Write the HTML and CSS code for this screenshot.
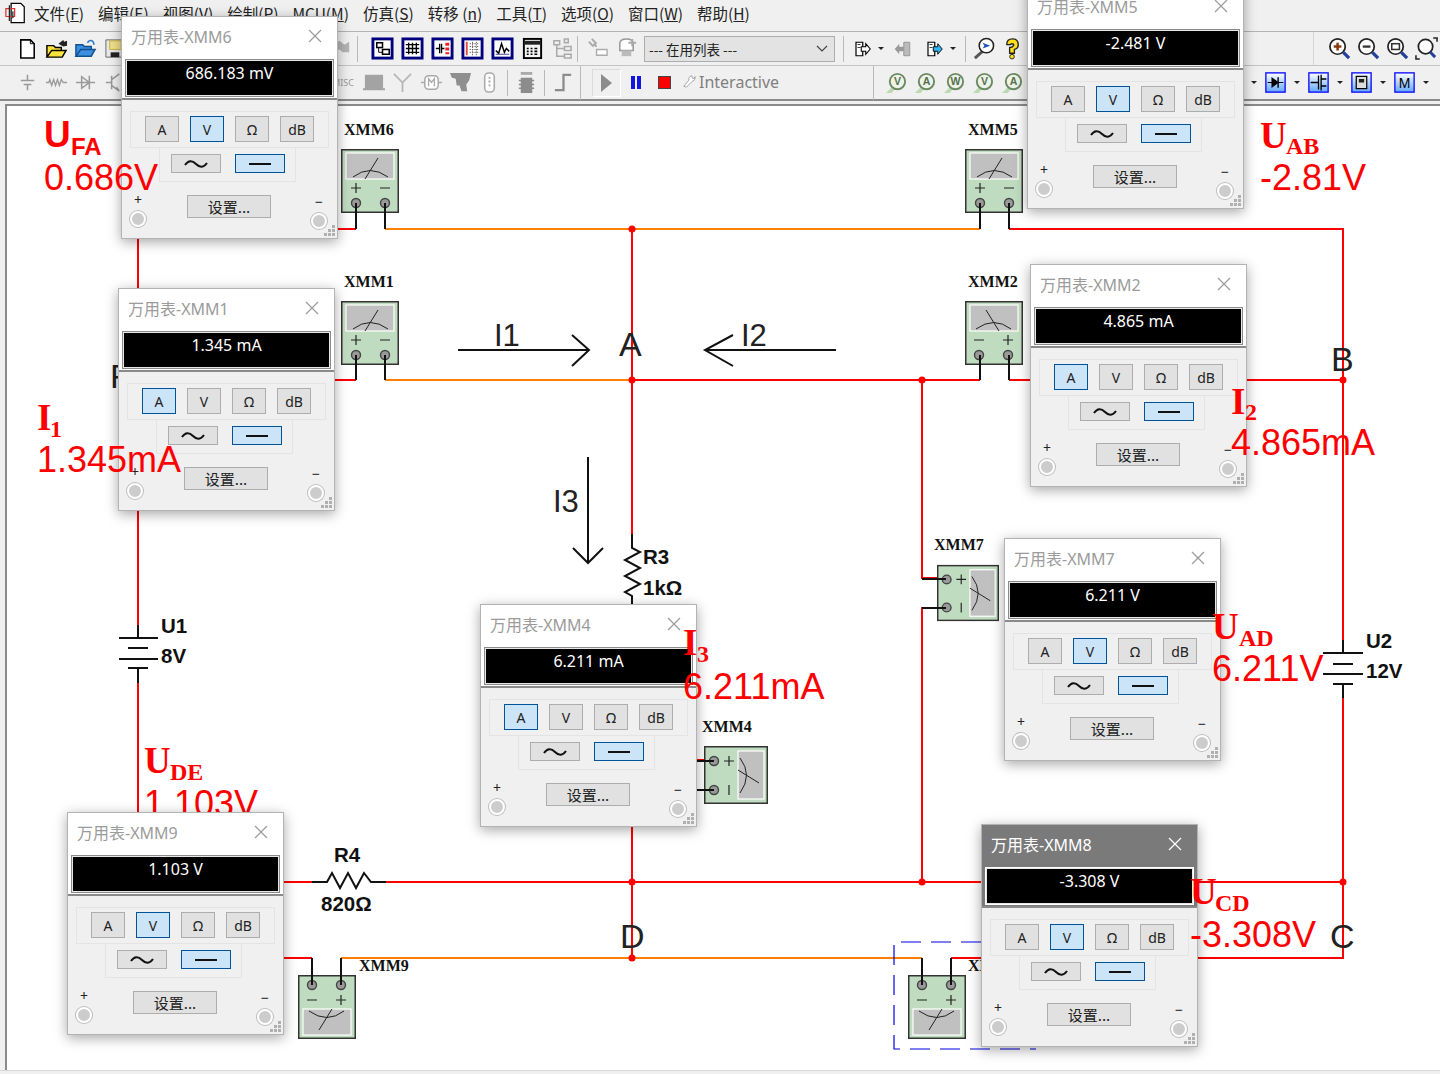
FILE: index.html
```html
<!DOCTYPE html>
<html lang="zh-CN">
<head>
  <meta charset="UTF-8" />
  <title>Multisim - 万用表</title>
  <link rel="stylesheet" href="styles.css">
</head>
<body>

  <!-- icon sprite -->
  <svg class="sprite" aria-hidden="true">
    <symbol id="i-app" viewBox="0 0 24 24"><path d="M7 1h11l4 4v18H7z" fill="#fff" stroke="#000" stroke-width="1.4"/><path d="M1 7h10v9H1z" fill="none" stroke="#d33" stroke-width="1.4"/><path d="M5 3v18M9 10v8" stroke="#222" stroke-width="1.4"/></symbol>
    <symbol id="i-new" viewBox="0 0 24 24"><path d="M5 3h10l4 4v15H5z" fill="#fff" stroke="#000" stroke-width="1.6"/><path d="M15 3v4h4" fill="none" stroke="#000"/></symbol>
    <symbol id="i-open" viewBox="0 0 24 24"><path d="M2 21V9h7l2 2h6v3H7l-5 7h16l4-7H7" fill="#ffe23c" stroke="#000" stroke-width="1.5"/><path d="M14 7l5-4 1 2 3-1v5l-4 1z" fill="#222"/></symbol>
    <symbol id="i-folder" viewBox="0 0 24 24"><path d="M2 20V8h7l2 2h7v3H7l-5 7h16l4-7H7" fill="#3b8ee0" stroke="#10508f" stroke-width="1.5"/><path d="M14 6q3-4 6-1l1 3" fill="none" stroke="#2a78c8" stroke-width="1.6"/></symbol>
    <symbol id="i-save" viewBox="0 0 24 24"><path d="M3 3h18v18H3z" fill="#e8e8e8" stroke="#666"/><path d="M7 4h12v9H7z" fill="#efe08a" stroke="#c9b23c"/><path d="M8 16h9v5H8z" fill="#222"/></symbol>
    <symbol id="i-gear" viewBox="0 0 24 24"><path d="M3 8l6-4 5 4 5-3v11h-7l-3-3-6 1z" fill="#b4b4b4"/></symbol>
    <symbol id="t-boxes" viewBox="0 0 24 24"><rect x="2" y="2" width="20" height="20" fill="#fff" stroke="#00007f" stroke-width="3"/><rect x="6" y="6" width="6" height="5" fill="#fff" stroke="#000" stroke-width="1.6"/><rect x="12" y="13" width="7" height="5" fill="#fff" stroke="#000" stroke-width="1.6"/><path d="M8 11v5h4" fill="none" stroke="#000"/></symbol>
    <symbol id="t-grid" viewBox="0 0 24 24"><rect x="2" y="2" width="20" height="20" fill="#fff" stroke="#00007f" stroke-width="3"/><path d="M5 8h14M5 12h14M5 16h14M8 6v12M12 6v12M16 6v12" stroke="#000" stroke-width="1.4"/></symbol>
    <symbol id="t-cap" viewBox="0 0 24 24"><rect x="2" y="2" width="20" height="20" fill="#fff" stroke="#00007f" stroke-width="3"/><path d="M5 12h4M11 12h3M9 7v10M11 7v10" stroke="#000" stroke-width="1.4"/><path d="M15 6h4v3h-4zM15 11h4v3h-4zM15 16h4v2h-4z" fill="#e22"/></symbol>
    <symbol id="t-sheet" viewBox="0 0 24 24"><rect x="2" y="2" width="20" height="20" fill="#fff" stroke="#00007f" stroke-width="3"/><path d="M5 5h2v14H5z" fill="#e44"/><path d="M9 7h10M9 10h10M9 13h10M9 16h10M12 5v14M16 5v14" stroke="#666" stroke-dasharray="1.5 1"/></symbol>
    <symbol id="t-wave" viewBox="0 0 24 24"><rect x="2" y="2" width="20" height="20" fill="#fff" stroke="#00007f" stroke-width="3"/><path d="M5 14l3 3 3-10 3 9 2-4 3 3" fill="none" stroke="#000" stroke-width="1.5"/><path d="M5 18h14" stroke="#448" stroke-width="1"/></symbol>
    <symbol id="t-chip" viewBox="0 0 24 24"><rect x="3" y="2" width="18" height="20" fill="#f4f4f4" stroke="#000" stroke-width="2"/><path d="M4 4h16v4H4z" fill="#222"/><path d="M6 12h2M10 12h2M14 12h3M6 15h2M10 15h2M14 15h3M6 18h2M10 18h2M14 18h3" stroke="#000" stroke-width="1.6"/></symbol>
    <symbol id="t-tree" viewBox="0 0 24 24"><path d="M3 4h6v4H3zM14 2h4v4h-4zM14 10h7v4h-7zM14 18h7v4h-7z" fill="none" stroke="#aaa" stroke-width="1.6"/><path d="M6 8v12h8M6 12h8" fill="none" stroke="#aaa" stroke-width="1.6"/></symbol>
    <symbol id="g-pin" viewBox="0 0 24 24"><path d="M3 5l5 5M6 2l5 5M8 7l3 3" stroke="#aaa" stroke-width="2"/><path d="M11 13h11v6H11z" fill="#fff" stroke="#aaa" stroke-width="1.4"/></symbol>
    <symbol id="g-plug" viewBox="0 0 24 24"><path d="M5 7q0-5 7-5t7 5v7H5z" fill="#fff" stroke="#999" stroke-width="1.6"/><path d="M7 14h10v6H7z" fill="#bbb"/><path d="M18 2v8M22 6h-8" stroke="#aaa" stroke-width="2"/></symbol>
    <symbol id="a-page" viewBox="0 0 24 24"><path d="M4 3h9v18H4z" fill="#fff" stroke="#000" stroke-width="1.6"/><path d="M6 6h4M6 10h4" stroke="#000"/><path d="M11 9h6V5l6 7-6 7v-4h-6z" fill="#fff" stroke="#000" stroke-width="1.4"/></symbol>
    <symbol id="a-page-grey" viewBox="0 0 24 24"><path d="M13 3h8v18h-8z" fill="#bbb" stroke="#888"/><path d="M13 9H7V5l-6 7 6 7v-4h6z" fill="#999"/></symbol>
    <symbol id="a-page-blue" viewBox="0 0 24 24"><path d="M4 3h9v18H4z" fill="#fff" stroke="#000" stroke-width="1.6"/><path d="M6 6h4M6 10h4" stroke="#000"/><path d="M11 9h6V5l6 7-6 7v-4h-6z" fill="#2fb6f0" stroke="#000" stroke-width="1.2"/></symbol>
    <symbol id="i-find" viewBox="0 0 24 24"><path d="M11 15l-8 7" stroke="#555" stroke-width="3"/><circle cx="15" cy="9" r="7.5" fill="#fff" stroke="#222" stroke-width="1.6"/><path d="M11 6l8 3-8 3 2-3z" fill="#1c4fc0"/></symbol>
    <symbol id="i-help" viewBox="0 0 24 24"><path d="M6 8q0-6 6-6t6 6q0 4-4 5v4h-5v-6q3 0 4-2t-2-2q-1 0-1 1z" fill="#ffe11a" stroke="#222" stroke-width="1.4"/><circle cx="11.5" cy="20.5" r="2.4" fill="#ffe11a" stroke="#222"/></symbol>
    <symbol id="z-plus" viewBox="0 0 24 24"><circle cx="10" cy="10" r="8" fill="#fff" stroke="#222" stroke-width="1.8"/><path d="M6 10h8M10 6v8" stroke="#8a3a12" stroke-width="2.6"/><path d="M16 16l6 6" stroke="#23409c" stroke-width="3.4"/></symbol>
    <symbol id="z-minus" viewBox="0 0 24 24"><circle cx="10" cy="10" r="8" fill="#fff" stroke="#222" stroke-width="1.8"/><path d="M6 10h8" stroke="#333" stroke-width="2.4"/><path d="M16 16l6 6" stroke="#23409c" stroke-width="3.4"/></symbol>
    <symbol id="z-box" viewBox="0 0 24 24"><circle cx="10" cy="10" r="8" fill="#fff" stroke="#222" stroke-width="1.8"/><rect x="6" y="7" width="8" height="6" fill="none" stroke="#333" stroke-width="1.6"/><path d="M16 16l6 6" stroke="#23409c" stroke-width="3.4"/></symbol>
    <symbol id="z-fit" viewBox="0 0 24 24"><circle cx="11" cy="10" r="7.5" fill="#fff" stroke="#222" stroke-width="1.8"/><path d="M1 19v4h4M23 5V1h-4" fill="none" stroke="#222" stroke-width="1.6"/><path d="M16 16l5 5" stroke="#23409c" stroke-width="3"/></symbol>
    <symbol id="c-batt" viewBox="0 0 24 24"><path d="M12 4v6M12 14v6M5 10h14M8 14h8" stroke="#9a9a9a" stroke-width="1.6"/></symbol>
    <symbol id="c-res" viewBox="0 0 24 24"><path d="M1 12h3l1-3 2 6 2-6 2 6 2-6 2 6 2-6 2 3h4" fill="none" stroke="#9a9a9a" stroke-width="1.4"/></symbol>
    <symbol id="c-diode" viewBox="0 0 24 24"><path d="M2 12h20M8 6v12l8-6zM16 5v14" fill="none" stroke="#9a9a9a" stroke-width="1.6"/></symbol>
    <symbol id="c-npn" viewBox="0 0 24 24"><path d="M9 5v14M3 12h6M9 9l8-6M9 15l8 6M14 17l3 4" fill="none" stroke="#9a9a9a" stroke-width="1.6"/></symbol>
    <symbol id="c-monitor" viewBox="0 0 24 24"><path d="M3 4h19v14H3zM1 18h23v2H1z" fill="#a3a3a3"/></symbol>
    <symbol id="c-ant" viewBox="0 0 24 24"><path d="M12 12v10M3 3l9 9 9-9" fill="none" stroke="#b5b5b5" stroke-width="1.8"/></symbol>
    <symbol id="c-mech" viewBox="0 0 24 24"><rect x="5" y="5" width="14" height="14" rx="4" fill="#fff" stroke="#aaa" stroke-width="1.6"/><path d="M1 12h4M19 12h4M9 16V8l3 4 3-4v8" fill="none" stroke="#aaa" stroke-width="1.4"/></symbol>
    <symbol id="c-rf" viewBox="0 0 24 24"><path d="M1 2h22l-2 8-3 4 1 7h-6l-2-6H8l-1-7-4-1z" fill="#8f8f8f"/></symbol>
    <symbol id="c-conn" viewBox="0 0 24 24"><rect x="7" y="2" width="10" height="20" rx="4" fill="#fff" stroke="#aaa" stroke-width="1.6"/><path d="M12 6v12" stroke="#aaa" stroke-width="2" stroke-dasharray="2 2"/></symbol>
    <symbol id="c-mcu" viewBox="0 0 24 24"><path d="M6 7h12v16H6z" fill="#8c8c8c"/><path d="M4 10h16M4 14h16M4 18h16" stroke="#8c8c8c" stroke-width="1.6"/><path d="M6 1h12v3H6z" fill="#aaa"/></symbol>
    <symbol id="c-step" viewBox="0 0 24 24"><path d="M3 20h9V4h8" fill="none" stroke="#8c8c8c" stroke-width="2.4"/></symbol>
    <symbol id="s-diode" viewBox="0 0 24 24"><rect x="1" y="1" width="22" height="22" fill="url(#tile)" stroke="#1414ff" stroke-width="1.6"/><path d="M3 12h18M8 7v10l7-5z" fill="#000" stroke="#000" stroke-width="1.2"/><path d="M15 6v12" stroke="#000" stroke-width="1.6"/></symbol>
    <symbol id="s-fet" viewBox="0 0 24 24"><rect x="1" y="1" width="22" height="22" fill="url(#tile)" stroke="#1414ff" stroke-width="1.6"/><path d="M3 12h9M12 4v16M15 3v18M15 8h6M15 16h6" fill="none" stroke="#000" stroke-width="1.5"/></symbol>
    <symbol id="s-chip" viewBox="0 0 24 24"><rect x="1" y="1" width="22" height="22" fill="url(#tile)" stroke="#1414ff" stroke-width="1.6"/><rect x="6" y="5" width="12" height="14" fill="#ddd" stroke="#000" stroke-width="1.4"/><rect x="9" y="8" width="6" height="4" fill="#222"/></symbol>
    <symbol id="s-blank" viewBox="0 0 24 24"><rect x="1" y="1" width="22" height="22" fill="url(#tile)" stroke="#1414ff" stroke-width="1.6"/></symbol>
    <symbol id="v-base" viewBox="0 0 24 24"><path d="M1 23l7-7 3 2-4 5z" fill="#bcd9b4"/><circle cx="13" cy="11" r="8" fill="#eef3ea" stroke="#6c8a62" stroke-width="2"/></symbol>
    <linearGradient id="tile" x1="0" y1="0" x2="0" y2="1"><stop offset="0" stop-color="#fff"/><stop offset="1" stop-color="#63a8ff"/></linearGradient>

    <!-- schematic multimeter, terminals along the bottom -->
    <symbol id="meter" viewBox="0 0 58 64" overflow="visible">
      <rect x="0.75" y="0.75" width="56.5" height="62.5" fill="#c0dcc0" stroke="#333" stroke-width="1.5"/>
      <rect x="5" y="4" width="48" height="26" fill="#c0c0c0" stroke="#fff" stroke-width="1.2"/>
      <path d="M12 28q17-13 35 0" fill="none" stroke="#222" stroke-width="1"/>
      <path d="M24 30l13-21" stroke="#222" stroke-width="1"/>
      <path d="M10 39h10M15 34v10M39 39h10" stroke="#222" stroke-width="1.2"/>
      <circle cx="15" cy="54" r="4.5" fill="#999" stroke="#444" stroke-width="1.4"/>
      <circle cx="44" cy="54" r="4.5" fill="#999" stroke="#444" stroke-width="1.4"/>
    </symbol>
    <symbol id="grip" viewBox="0 0 12 12"><path d="M8 0h3v3H8zM4 4h3v3H4zM8 4h3v3H8zM0 8h3v3H0zM4 8h3v3H4zM8 8h3v3H8z" fill="#b0b0b0"/></symbol>
    <symbol id="close" viewBox="0 0 14 14"><path d="M1 1l12 12M13 1L1 13" fill="none" stroke="currentColor" stroke-width="1.2"/></symbol>
  </svg>

  <div class="app">
    <nav class="menubar">
      <svg class="app-icon"><use href="#i-app"/></svg>
      <span class="menu-item">文件(<u>F</u>)</span>
      <span class="menu-item">编辑(<u>E</u>)</span>
      <span class="menu-item">视图(<u>V</u>)</span>
      <span class="menu-item">绘制(<u>P</u>)</span>
      <span class="menu-item">MCU(<u>M</u>)</span>
      <span class="menu-item">仿真(<u>S</u>)</span>
      <span class="menu-item">转移 (<u>n</u>)</span>
      <span class="menu-item">工具(<u>T</u>)</span>
      <span class="menu-item">选项(<u>O</u>)</span>
      <span class="menu-item">窗口(<u>W</u>)</span>
      <span class="menu-item">帮助(<u>H</u>)</span>
    </nav>

    <div class="toolbar row-main">
      <span class="ic"><svg><use href="#i-new"/></svg></span>
      <span class="ic"><svg><use href="#i-open"/></svg></span>
      <span class="ic"><svg><use href="#i-folder"/></svg></span>
      <span class="ic"><svg><use href="#i-save"/></svg></span>
      <span class="hidden-gap"></span>
      <span class="ic"><svg><use href="#i-gear"/></svg></span>
      <span class="sep sep-a"></span>
      <span class="ic wide"><svg><use href="#t-boxes"/></svg></span>
      <span class="ic wide"><svg><use href="#t-grid"/></svg></span>
      <span class="ic wide"><svg><use href="#t-cap"/></svg></span>
      <span class="ic wide"><svg><use href="#t-sheet"/></svg></span>
      <span class="ic wide"><svg><use href="#t-wave"/></svg></span>
      <span class="ic wide"><svg><use href="#t-chip"/></svg></span>
      <span class="ic wide"><svg><use href="#t-tree"/></svg></span>
      <span class="sep"></span>
      <span class="ic pin"><svg><use href="#g-pin"/></svg></span>
      <span class="ic"><svg><use href="#g-plug"/></svg></span>
      <div class="combo">
        <span>--- 在用列表 ---</span>
        <svg class="chevron" viewBox="0 0 12 8"><path d="M1 1l5 5 5-5" fill="none" stroke="#444" stroke-width="1.2"/></svg>
      </div>
      <span class="sep sep-b"></span>
      <span class="ic small"><svg><use href="#a-page"/></svg></span>
      <span class="drop"></span>
      <span class="ic small pad"><svg><use href="#a-page-grey"/></svg></span>
      <span class="ic small spaced"><svg><use href="#a-page-blue"/></svg></span>
      <span class="drop"></span>
      <span class="sep sep-c"></span>
      <span class="ic"><svg><use href="#i-find"/></svg></span>
      <span class="ic"><svg><use href="#i-help"/></svg></span>
      <div class="right-tools">
        <span class="ic"><svg><use href="#z-plus"/></svg></span>
        <span class="ic"><svg><use href="#z-minus"/></svg></span>
        <span class="ic"><svg><use href="#z-box"/></svg></span>
        <span class="ic"><svg><use href="#z-fit"/></svg></span>
      </div>
    </div>

    <div class="toolbar row-parts">
      <span class="ic"><svg><use href="#c-batt"/></svg></span>
      <span class="ic"><svg><use href="#c-res"/></svg></span>
      <span class="ic"><svg><use href="#c-diode"/></svg></span>
      <span class="ic"><svg><use href="#c-npn"/></svg></span>
      <span class="hidden-gap parts-gap"></span>
      <span class="misc">MISC</span>
      <span class="ic"><svg><use href="#c-monitor"/></svg></span>
      <span class="ic"><svg><use href="#c-ant"/></svg></span>
      <span class="ic"><svg><use href="#c-mech"/></svg></span>
      <span class="ic"><svg><use href="#c-rf"/></svg></span>
      <span class="ic"><svg><use href="#c-conn"/></svg></span>
      <span class="sep sep-d"></span>
      <span class="ic"><svg><use href="#c-mcu"/></svg></span>
      <span class="sep sep-e"></span>
      <span class="ic"><svg><use href="#c-step"/></svg></span>
      <span class="sep sep-f"></span>
      <span class="play-box"><span class="play"></span></span>
      <span class="pause"></span>
      <span class="stop"></span>
      <svg class="wrench" viewBox="0 0 16 16"><path d="M2 14l6-7q-1-4 3-5l1 3 2 0 1-2q1 4-4 6l-6 6z" fill="#fff" stroke="#999"/></svg>
      <span class="interactive">Interactive</span>
      <span class="sep sep-g"></span>
      <span class="ic"><svg viewBox="0 0 24 24"><use href="#v-base" width="24" height="24"/><text x="13" y="15" class="meter-text">V</text></svg></span>
      <span class="ic"><svg viewBox="0 0 24 24"><use href="#v-base" width="24" height="24"/><text x="13" y="15" class="meter-text">A</text></svg></span>
      <span class="ic"><svg viewBox="0 0 24 24"><use href="#v-base" width="24" height="24"/><text x="13" y="15" class="meter-text">W</text></svg></span>
      <span class="ic"><svg viewBox="0 0 24 24"><use href="#v-base" width="24" height="24"/><text x="13" y="15" class="meter-text">V</text></svg></span>
      <span class="ic"><svg viewBox="0 0 24 24"><use href="#v-base" width="24" height="24"/><text x="13" y="15" class="meter-text">A</text></svg></span>
      <div class="right-tools tiles">
        <span class="drop"></span>
        <span class="ic"><svg><use href="#s-diode"/></svg></span><span class="drop"></span>
        <span class="ic"><svg><use href="#s-fet"/></svg></span><span class="drop"></span>
        <span class="ic"><svg><use href="#s-chip"/></svg></span><span class="drop"></span>
        <span class="ic"><svg viewBox="0 0 24 24"><use href="#s-blank" width="24" height="24"/><text x="12" y="18" class="tile-text">M</text></svg></span><span class="drop"></span>
      </div>
    </div>

    <div class="sheet"></div>
    <div class="statusbar"></div>
  </div>

  <!-- free canvas: the circuit, the instrument windows on it, then the hand-written notes -->
  <div class="stage">
    <svg class="circuit" viewBox="0 0 1440 1074">
      <g class="wire red">
        <path d="M138 229V625M138 683V958"/>
        <path d="M138 229H356M1009 229H1343V640M1343 698V958H951"/>
        <path d="M138 380H356M632 380H980M1009 380H1343"/>
        <path d="M632 229V534M632 604V958"/>
        <path d="M922 380V578H946M922 882V608H946"/>
        <path d="M138 882H312M386 882H1343"/>
        <path d="M138 958H312"/>
        <path d="M690 760H714M690 790H714"/>
      </g>
      <g class="wire orange">
        <path d="M385 229H980M385 380H632M341 958H922"/>
      </g>
      <g class="nodes">
        <circle cx="632" cy="229" r="3.5"/><circle cx="632" cy="380" r="3.5"/>
        <circle cx="922" cy="380" r="3.5"/><circle cx="1343" cy="380" r="3.5"/>
        <circle cx="632" cy="882" r="3.5"/><circle cx="922" cy="882" r="3.5"/>
        <circle cx="1343" cy="882" r="3.5"/><circle cx="632" cy="958" r="3.5"/>
      </g>

      <!-- parts -->
      <use href="#meter" x="341" y="149" width="58" height="64"/>
      <use href="#meter" x="965" y="149" width="58" height="64"/>
      <use href="#meter" x="341" y="301" width="58" height="64"/>
      <use href="#meter" transform="translate(1023 301) scale(-1 1)" width="58" height="64"/>
      <use href="#meter" transform="translate(999 564) rotate(90)" width="58" height="62"/>
      <use href="#meter" transform="translate(768 746) rotate(90)" width="58" height="64"/>
      <use href="#meter" transform="translate(356 1039) rotate(180)" width="58" height="64"/>
      <use href="#meter" transform="translate(966 1039) rotate(180)" width="58" height="64"/>
      <g class="wire black">
        <path d="M138 625V638M119 638H158M128 648H148M119 659H158M128 668H148M138 668V683"/>
        <path d="M1343 640V653M1323 653H1363M1333 664H1353M1323 674H1363M1333 684H1353M1343 684V698"/>
        <path d="M632 534V548L640 552 625 560 640 568 625 576 640 584 625 592 632 596V604"/>
        <path d="M312 882H327L332 873 340 888 348 873 356 888 364 873 371 882H386"/>
        <path d="M356 203V229M385 203V229M980 203V229M1009 203V229"/>
        <path d="M356 355V380M385 355V380M980 355V380M1009 355V380"/>
        <path d="M312 958V985M341 958V985M922 958V985M951 958V985"/>
        <path d="M922 579H946M922 608H946M696 761H714M696 790H714"/>
      </g>

      <path class="select-box" d="M981 942H894V1049H1036"/>

      <g class="refdes">
        <text x="344" y="135">XMM6</text>
        <text x="968" y="135">XMM5</text>
        <text x="344" y="287">XMM1</text>
        <text x="968" y="287">XMM2</text>
        <text x="934" y="550">XMM7</text>
        <text x="702" y="732">XMM4</text>
        <text x="359" y="971">XMM9</text>
        <text x="968" y="971">XMM8</text>
      </g>
      <g class="part-label">
        <text x="161" y="633">U1</text>
        <text x="161" y="663">8V</text>
        <text x="1366" y="648">U2</text>
        <text x="1366" y="678">12V</text>
        <text x="643" y="564">R3</text>
        <text x="643" y="595">1kΩ</text>
        <text x="334" y="862">R4</text>
        <text x="321" y="911">820Ω</text>
      </g>

      <g class="note-current">
        <text x="494" y="346">I1</text>
        <text x="741" y="346">I2</text>
        <text x="553" y="512">I3</text>
      </g>
      <g class="note-black">
        <text x="619" y="356">A</text>
        <text x="1331" y="371">B</text>
        <text x="620" y="948">D</text>
        <text x="1330" y="948">C</text>
        <text x="110" y="388">F</text>
      </g>
      <g class="arrow">
        <path d="M458 350H589M572 335L589 350 572 366"/>
        <path d="M836 350H705M733 335L705 350 733 366"/>
        <path d="M588 457V563M573 548L588 563 603 548"/>
      </g>

      <!-- this note sits under the XMM9 window -->
      <text class="note-val" x="144" y="816">1.103V</text>
      <text class="note-serif" x="144" y="773">U</text>
      <text class="note-serif-sub" x="170" y="780">DE</text>
    </svg>

    <section class="win xmm6">
      <header class="win-title"><span>万用表-XMM6</span><svg><use href="#close"/></svg></header>
      <div class="display">686.183 mV</div>
      <div class="panel">
        <div class="group modes"><button>A</button><button class="on">V</button><button>Ω</button><button>dB</button></div>
        <div class="group signal"><button class="sig"><svg viewBox="0 0 24 8"><path d="M1 5q5-7 11-1t11-1"/></svg></button><button class="sig on"><svg viewBox="0 0 24 8"><path d="M1 4h22"/></svg></button></div>
        <div class="bottom">
          <div class="term">+<i></i></div>
          <button class="setup">设置...</button>
          <div class="term minus">−<i></i></div>
        </div>
      </div>
      <svg class="win-grip"><use href="#grip"/></svg>
    </section>

    <section class="win xmm5">
      <header class="win-title"><span>万用表-XMM5</span><svg><use href="#close"/></svg></header>
      <div class="display">-2.481 V</div>
      <div class="panel">
        <div class="group modes"><button>A</button><button class="on">V</button><button>Ω</button><button>dB</button></div>
        <div class="group signal"><button class="sig"><svg viewBox="0 0 24 8"><path d="M1 5q5-7 11-1t11-1"/></svg></button><button class="sig on"><svg viewBox="0 0 24 8"><path d="M1 4h22"/></svg></button></div>
        <div class="bottom">
          <div class="term">+<i></i></div>
          <button class="setup">设置...</button>
          <div class="term minus">−<i></i></div>
        </div>
      </div>
      <svg class="win-grip"><use href="#grip"/></svg>
    </section>

    <section class="win xmm1">
      <header class="win-title"><span>万用表-XMM1</span><svg><use href="#close"/></svg></header>
      <div class="display">1.345 mA</div>
      <div class="panel">
        <div class="group modes"><button class="on">A</button><button>V</button><button>Ω</button><button>dB</button></div>
        <div class="group signal"><button class="sig"><svg viewBox="0 0 24 8"><path d="M1 5q5-7 11-1t11-1"/></svg></button><button class="sig on"><svg viewBox="0 0 24 8"><path d="M1 4h22"/></svg></button></div>
        <div class="bottom">
          <div class="term">+<i></i></div>
          <button class="setup">设置...</button>
          <div class="term minus">−<i></i></div>
        </div>
      </div>
      <svg class="win-grip"><use href="#grip"/></svg>
    </section>

    <section class="win xmm2">
      <header class="win-title"><span>万用表-XMM2</span><svg><use href="#close"/></svg></header>
      <div class="display">4.865 mA</div>
      <div class="panel">
        <div class="group modes"><button class="on">A</button><button>V</button><button>Ω</button><button>dB</button></div>
        <div class="group signal"><button class="sig"><svg viewBox="0 0 24 8"><path d="M1 5q5-7 11-1t11-1"/></svg></button><button class="sig on"><svg viewBox="0 0 24 8"><path d="M1 4h22"/></svg></button></div>
        <div class="bottom">
          <div class="term">+<i></i></div>
          <button class="setup">设置...</button>
          <div class="term minus">−<i></i></div>
        </div>
      </div>
      <svg class="win-grip"><use href="#grip"/></svg>
    </section>

    <section class="win xmm7">
      <header class="win-title"><span>万用表-XMM7</span><svg><use href="#close"/></svg></header>
      <div class="display">6.211 V</div>
      <div class="panel">
        <div class="group modes"><button>A</button><button class="on">V</button><button>Ω</button><button>dB</button></div>
        <div class="group signal"><button class="sig"><svg viewBox="0 0 24 8"><path d="M1 5q5-7 11-1t11-1"/></svg></button><button class="sig on"><svg viewBox="0 0 24 8"><path d="M1 4h22"/></svg></button></div>
        <div class="bottom">
          <div class="term">+<i></i></div>
          <button class="setup">设置...</button>
          <div class="term minus">−<i></i></div>
        </div>
      </div>
      <svg class="win-grip"><use href="#grip"/></svg>
    </section>

    <section class="win xmm4">
      <header class="win-title"><span>万用表-XMM4</span><svg><use href="#close"/></svg></header>
      <div class="display">6.211 mA</div>
      <div class="panel">
        <div class="group modes"><button class="on">A</button><button>V</button><button>Ω</button><button>dB</button></div>
        <div class="group signal"><button class="sig"><svg viewBox="0 0 24 8"><path d="M1 5q5-7 11-1t11-1"/></svg></button><button class="sig on"><svg viewBox="0 0 24 8"><path d="M1 4h22"/></svg></button></div>
        <div class="bottom">
          <div class="term">+<i></i></div>
          <button class="setup">设置...</button>
          <div class="term minus">−<i></i></div>
        </div>
      </div>
      <svg class="win-grip"><use href="#grip"/></svg>
    </section>

    <section class="win xmm9">
      <header class="win-title"><span>万用表-XMM9</span><svg><use href="#close"/></svg></header>
      <div class="display">1.103 V</div>
      <div class="panel">
        <div class="group modes"><button>A</button><button class="on">V</button><button>Ω</button><button>dB</button></div>
        <div class="group signal"><button class="sig"><svg viewBox="0 0 24 8"><path d="M1 5q5-7 11-1t11-1"/></svg></button><button class="sig on"><svg viewBox="0 0 24 8"><path d="M1 4h22"/></svg></button></div>
        <div class="bottom">
          <div class="term">+<i></i></div>
          <button class="setup">设置...</button>
          <div class="term minus">−<i></i></div>
        </div>
      </div>
      <svg class="win-grip"><use href="#grip"/></svg>
    </section>

    <section class="win xmm8 active">
      <header class="win-title"><span>万用表-XMM8</span><svg><use href="#close"/></svg></header>
      <div class="display">-3.308 V</div>
      <div class="panel">
        <div class="group modes"><button>A</button><button class="on">V</button><button>Ω</button><button>dB</button></div>
        <div class="group signal"><button class="sig"><svg viewBox="0 0 24 8"><path d="M1 5q5-7 11-1t11-1"/></svg></button><button class="sig on"><svg viewBox="0 0 24 8"><path d="M1 4h22"/></svg></button></div>
        <div class="bottom">
          <div class="term">+<i></i></div>
          <button class="setup">设置...</button>
          <div class="term minus">−<i></i></div>
        </div>
      </div>
      <svg class="win-grip"><use href="#grip"/></svg>
    </section>

    <svg class="notes" viewBox="0 0 1440 1074">
      <text class="note-sans" x="44" y="147">U</text>
      <text class="note-sans-sub" x="71" y="155">FA</text>
      <text class="note-val" x="44" y="190">0.686V</text>

      <text class="note-serif" x="1260" y="148">U</text>
      <text class="note-serif-sub" x="1286" y="154">AB</text>
      <text class="note-val" x="1260" y="190">-2.81V</text>

      <text class="note-serif" x="37" y="430">I</text>
      <text class="note-serif-sub" x="50" y="437">1</text>
      <text class="note-val" x="37" y="472">1.345mA</text>

      <text class="note-serif" x="1231" y="414">I</text>
      <text class="note-serif-sub" x="1245" y="420">2</text>
      <text class="note-val" x="1231" y="455">4.865mA</text>

      <text class="note-serif" x="683" y="655">I</text>
      <text class="note-serif-sub" x="697" y="662">3</text>
      <text class="note-val" x="683" y="699">6.211mA</text>

      <text class="note-serif" x="1212" y="639">U</text>
      <text class="note-serif-sub" x="1239" y="646">AD</text>
      <text class="note-val" x="1212" y="681">6.211V</text>

      <text class="note-serif" x="1190" y="904">U</text>
      <text class="note-serif-sub" x="1215" y="911">CD</text>
      <text class="note-val" x="1190" y="947">-3.308V</text>
    </svg>
  </div>

</body>
</html>
```

FILE: styles.css
```css
* {
  box-sizing: border-box;
}

body {
  margin: 0;
  background: #fff;
  font-family: "Noto Sans", "Noto Sans CJK SC", sans-serif;
}

.sprite {
  position: absolute;
  width: 0;
  height: 0;
}

.app {
  width: 1440px;
  height: 1074px;
  display: flex;
  flex-direction: column;
  overflow: hidden;
  background: #f0f0f0;
}

/* menu */

.menubar {
  height: 32px;
  flex: none;
  display: flex;
  align-items: center;
  gap: 14px;
  padding: 0 0 5px 5px;
  border-bottom: 1px solid #b4b4b4;
  font-size: 15.5px;
  color: #222;
}

.app-icon {
  width: 21px;
  height: 24px;
  margin-right: -6px;
}

.menu-item {
  white-space: nowrap;
  font-family: "Noto Sans CJK SC", "Noto Sans", sans-serif;
}

/* toolbars */

.toolbar {
  flex: none;
  display: flex;
  align-items: center;
  padding-left: 13px;
  border-bottom: 1px solid #c4c4c4;
}

.row-main {
  height: 34px;
}

.row-parts {
  height: 35px;
  border-bottom: 2px solid #8a8a8a;
}

.ic {
  width: 29px;
  height: 24px;
  flex: none;
  display: flex;
  align-items: center;
  justify-content: center;
}

.ic svg {
  width: 23px;
  height: 23px;
}

.ic.wide {
  width: 30px;
}

.ic.small {
  width: 20px;
}

.ic.small svg {
  width: 18px;
  height: 18px;
}

.ic.small.pad {
  margin-left: 7px;
}

.ic.spaced {
  margin-left: 11px;
}

.ic.pin {
  margin-left: 5px;
}

.hidden-gap {
  width: 199px;
  flex: none;
}

.parts-gap {
  width: 203px;
}

.sep {
  width: 1px;
  height: 26px;
  flex: none;
  background: #b9b9b9;
}

.sep-a {
  margin-right: 9px;
}

.sep-b {
  margin: 0 8px;
}

.sep-c {
  margin: 0 3px 0 7px;
}

.sep-d {
  margin: 0 4px 0 3px;
}

.sep-e {
  margin: 0 4px 0 3px;
}

.sep-f {
  margin: 0 11px 0 2px;
  height: 34px;
}

.sep-g {
  margin: 0 8px 0 94px;
  height: 34px;
}

.drop {
  width: 10px;
  height: 10px;
  flex: none;
  display: flex;
  align-items: center;
  justify-content: center;
}

.row-main .drop {
  margin-left: 4px;
}

.drop::after {
  content: "";
  border: 3px solid transparent;
  border-top: 3px solid #222;
  margin-top: 3px;
}

.combo {
  width: 191px;
  height: 26px;
  flex: none;
  margin-left: 3px;
  padding: 0 6px 0 4px;
  display: flex;
  align-items: center;
  justify-content: space-between;
  background: #e3e3e3;
  border: 1px solid #adadad;
  font-size: 13.5px;
  color: #222;
  font-family: "Noto Sans CJK SC", "Noto Sans", sans-serif;
}

.chevron {
  width: 12px;
  height: 8px;
}

.right-tools {
  margin-left: auto;
  flex: none;
  display: flex;
  align-items: center;
  height: 100%;
  padding-left: 11px;
  margin-right: -1px;
  border-left: 1px solid #d6d6d6;
}

.right-tools.tiles {
  padding-left: 0;
  border-left: 0;
  margin-right: 9px;
}

.right-tools.tiles .ic {
  width: 33px;
}

.right-tools.tiles .ic svg {
  width: 21px;
  height: 21px;
}

.misc {
  width: 27px;
  flex: none;
  font-size: 9px;
  color: #999;
}

.play-box {
  width: 29px;
  height: 28px;
  flex: none;
  display: flex;
  align-items: center;
  justify-content: center;
  border: 1px solid #dcdcdc;
  border-right-color: #fff;
  border-bottom-color: #fff;
}

.play {
  border-left: 11px solid #8c8c8c;
  border-top: 9px solid transparent;
  border-bottom: 9px solid transparent;
}

.pause {
  width: 10px;
  height: 13px;
  flex: none;
  margin-left: 10px;
  background: linear-gradient(90deg, #1414e0 0 4px, transparent 4px 6px, #1414e0 6px);
}

.stop {
  width: 13px;
  height: 13px;
  flex: none;
  margin-left: 17px;
  background: #f00;
  border: 1px solid #444;
}

.wrench {
  width: 14px;
  height: 14px;
  flex: none;
  margin: 0 3px 4px 11px;
}

.interactive {
  flex: none;
  margin-bottom: 2px;
  font-size: 16px;
  color: #808080;
}

.meter-text {
  font-family: "Liberation Sans", sans-serif;
  font-size: 11px;
  font-weight: 700;
  text-anchor: middle;
  fill: #55704d;
}

.tile-text {
  font-family: "Liberation Sans", sans-serif;
  font-size: 16px;
  text-anchor: middle;
  fill: #000;
}

/* sheet */

.sheet {
  flex: 1;
  margin: 3px 0 0 5px;
  border-top: 2px solid #8a8a8a;
  border-left: 2px solid #8a8a8a;
  background: #fff;
}

.statusbar {
  height: 4px;
  flex: none;
  border-top: 1px solid #d8d8d8;
  background: #f0f0f0;
}

.stage {
  position: absolute;
  left: 0;
  top: 0;
  width: 1440px;
  height: 1074px;
  overflow: hidden;
}

.circuit,
.notes {
  position: absolute;
  left: 0;
  top: 0;
  width: 1440px;
  height: 1074px;
}

.notes {
  pointer-events: none;
}

.wire {
  fill: none;
  stroke-width: 2;
}

.wire.red {
  stroke: #f00;
}

.wire.orange {
  stroke: #ff8000;
}

.wire.black {
  stroke: #111;
}

.nodes {
  fill: #f00;
}

.select-box {
  fill: none;
  stroke: #0000e6;
  stroke-width: 1.2;
  stroke-dasharray: 20 10;
}

.refdes text {
  font-family: "Liberation Serif", serif;
  font-weight: 700;
  font-size: 16px;
  fill: #111;
}

.part-label text {
  font-family: "Liberation Sans", sans-serif;
  font-weight: 700;
  font-size: 20.5px;
  fill: #111;
}

.note-black text {
  font-family: "Liberation Sans", sans-serif;
  font-size: 34px;
  fill: #222;
}

.note-current text {
  font-family: "Liberation Sans", sans-serif;
  font-size: 31px;
  fill: #222;
}

.arrow path {
  fill: none;
  stroke: #111;
  stroke-width: 2;
}

.note-val {
  font-family: "Liberation Sans", sans-serif;
  font-size: 36px;
  fill: #f00;
}

.note-sans,
.note-sans-sub {
  font-family: "Liberation Sans", sans-serif;
  font-weight: 700;
  fill: #f00;
}

.note-serif,
.note-serif-sub {
  font-family: "Liberation Serif", serif;
  font-weight: 700;
  fill: #f00;
}

.note-sans,
.note-serif {
  font-size: 37px;
}

.note-sans-sub,
.note-serif-sub {
  font-size: 24px;
}

/* multimeter windows */

.win {
  position: absolute;
  width: 217px;
  height: 223px;
  display: flex;
  flex-direction: column;
  background: #fff;
  border: 1px solid #b3b3b3;
  box-shadow: 0 3px 12px rgba(0, 0, 0, 0.35);
  font-family: "Noto Sans", "Noto Sans CJK SC", sans-serif;
}

.xmm6 { left: 121px; top: 16px; }
.xmm5 { left: 1027px; top: -14px; }
.xmm1 { left: 118px; top: 288px; }
.xmm2 { left: 1030px; top: 264px; }
.xmm7 { left: 1004px; top: 538px; }
.xmm4 { left: 480px; top: 604px; }
.xmm9 { left: 67px; top: 812px; }
.xmm8 { left: 981px; top: 824px; }

.win-title {
  height: 42px;
  flex: none;
  display: flex;
  align-items: center;
  justify-content: space-between;
  padding: 0 15px 4px 9px;
  color: #9b9b9b;
  font-size: 16px;
}

.win-title svg {
  width: 14px;
  height: 14px;
}

.win.active {
  background: #7a7a7a;
}

.win.active .win-title {
  color: #fff;
}

.display {
  height: 38px;
  flex: none;
  margin: 0 3px;
  text-align: center;
  background: #000;
  border: 2px solid #e8e8e8;
  outline: 1px solid #8a8a8a;
  outline-offset: -1px;
  color: #fff;
  font-size: 16px;
  line-height: 24px;
}

.win.active .display {
  outline-color: #fff;
}

.panel {
  flex: 1;
  margin-top: 1px;
  padding-top: 11px;
  background: #f0f0f0;
  border-top: 2px solid #8a8a8a;
}

.group {
  display: flex;
  justify-content: center;
  border: 1px solid #e4e4e4;
}

.modes {
  height: 37px;
  margin: 0 8px;
  padding-top: 4px;
  gap: 11px;
}

.signal {
  width: 137px;
  height: 34px;
  margin-left: 37px;
  padding-top: 6px;
  border-top: 0;
  gap: 14px;
}

.win button {
  padding: 0;
  background: #e1e1e1;
  border: 1px solid #adadad;
  color: #222;
  font-family: "Noto Sans", "Noto Sans CJK SC", sans-serif;
}

.modes button {
  width: 34px;
  height: 26px;
  font-size: 14px;
}

.win button.on {
  background: #cce4f7;
  border-color: #005499;
}

.sig {
  width: 50px;
  height: 19px;
  display: flex;
  align-items: center;
  justify-content: center;
}

.sig svg {
  width: 24px;
  height: 8px;
  fill: none;
  stroke: #111;
  stroke-width: 2;
}

.bottom {
  display: flex;
  justify-content: space-between;
  align-items: flex-start;
  padding: 0 9px 0 7px;
  margin-top: 9px;
}

.term {
  width: 18px;
  margin-top: 2px;
  display: flex;
  flex-direction: column;
  align-items: center;
  font-size: 14px;
  line-height: 14px;
  color: #222;
}

.term.minus {
  margin-top: 4px;
}

.term i {
  width: 16px;
  height: 16px;
  margin-top: 4px;
  border-radius: 50%;
  background: #ccc;
  border: 2px solid #fff;
  box-shadow: 0 0 0 1px #bdbdbd;
}

.win button.setup {
  width: 84px;
  height: 23px;
  margin: 4px 0 0 1px;
  font-size: 15px;
  line-height: 19px;
  font-family: "Noto Sans CJK SC", "Noto Sans", sans-serif;
}

.win-grip {
  position: absolute;
  right: 1px;
  bottom: 1px;
  width: 12px;
  height: 12px;
}
```
